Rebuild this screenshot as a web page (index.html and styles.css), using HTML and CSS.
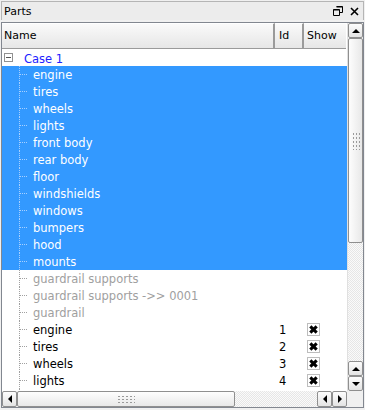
FILE: index.html
```html
<!DOCTYPE html>
<html lang="en">
<head>
    <meta charset="UTF-8">
    <title>Parts</title>
    <link rel="stylesheet" href="styles.css">
</head>
<body>
    <div class="dock">
        <div class="titlebar">
            <span class="title">Parts</span>
            <span class="title-btns">
                <svg width="10" height="10" viewBox="0 0 10 10"><path d="M3.5 0.5h6v6h-3M0.5 3.5h6v6h-6z" fill="none" stroke="#000"/><path d="M3.5 1h6M0.5 4h6" stroke="#000"/></svg>
                <svg width="9" height="9" viewBox="0 0 9 9"><path d="M1 1L8 8M8 1L1 8" stroke="#000" stroke-width="1.6"/></svg>
            </span>
        </div>

        <div class="tree">
            <div class="view">
                <div class="header">
                    <div class="hcell c-name">Name</div>
                    <div class="hcell c-id">Id</div>
                    <div class="hcell c-show">Show</div>
                </div>
                <div class="rows">
                    <div class="row root">
                        <div class="c-name"><span class="expander"></span><span class="label">Case 1</span></div>
                    </div>
                    <div class="row sel"><div class="c-name"><span class="branch"></span>engine</div></div>
                    <div class="row sel"><div class="c-name"><span class="branch"></span>tires</div></div>
                    <div class="row sel"><div class="c-name"><span class="branch"></span>wheels</div></div>
                    <div class="row sel"><div class="c-name"><span class="branch"></span>lights</div></div>
                    <div class="row sel"><div class="c-name"><span class="branch"></span>front body</div></div>
                    <div class="row sel"><div class="c-name"><span class="branch"></span>rear body</div></div>
                    <div class="row sel"><div class="c-name"><span class="branch"></span>floor</div></div>
                    <div class="row sel"><div class="c-name"><span class="branch"></span>windshields</div></div>
                    <div class="row sel"><div class="c-name"><span class="branch"></span>windows</div></div>
                    <div class="row sel"><div class="c-name"><span class="branch"></span>bumpers</div></div>
                    <div class="row sel"><div class="c-name"><span class="branch"></span>hood</div></div>
                    <div class="row sel"><div class="c-name"><span class="branch"></span>mounts</div></div>
                    <div class="row dim"><div class="c-name"><span class="branch"></span>guardrail supports</div></div>
                    <div class="row dim"><div class="c-name"><span class="branch"></span>guardrail supports -&gt;&gt; 0001</div></div>
                    <div class="row dim"><div class="c-name"><span class="branch"></span>guardrail</div></div>
                    <div class="row"><div class="c-name"><span class="branch"></span>engine</div><div class="c-id">1</div><div class="c-show"><span class="check"></span></div></div>
                    <div class="row"><div class="c-name"><span class="branch"></span>tires</div><div class="c-id">2</div><div class="c-show"><span class="check"></span></div></div>
                    <div class="row"><div class="c-name"><span class="branch"></span>wheels</div><div class="c-id">3</div><div class="c-show"><span class="check"></span></div></div>
                    <div class="row"><div class="c-name"><span class="branch"></span>lights</div><div class="c-id">4</div><div class="c-show"><span class="check"></span></div></div>
                    <div class="row"><div class="c-name"><span class="branch"></span></div><div class="c-id"></div><div class="c-show"><span class="check"></span></div></div>
                </div>
            </div>

            <div class="vscroll">
                <div class="sbtn"><span class="arr up"></span></div>
                <div class="vthumb"><span class="grip"></span></div>
                <div class="track"></div>
                <div class="sbtn"><span class="arr up"></span></div>
                <div class="sbtn"><span class="arr down"></span></div>
            </div>

            <div class="hscroll">
                <div class="sbtn"><span class="arr left"></span></div>
                <div class="hthumb"><span class="grip wide"></span></div>
                <div class="track"></div>
                <div class="sbtn"><span class="arr left"></span></div>
                <div class="sbtn"><span class="arr right"></span></div>
            </div>

            <div class="corner"></div>
        </div>
    </div>
</body>
</html>
```

FILE: styles.css
```css
body {
    margin: 0;
    width: 365px;
    height: 410px;
    background: #f0f0f0;
    font-family: Tahoma, "DejaVu Sans", sans-serif;
    font-size: 11px;
    overflow: hidden;
}
.dock {
    display: flex;
    flex-direction: column;
    height: 410px;
    box-sizing: border-box;
    padding: 1px 1px 2px 1px;
}
.titlebar {
    display: flex;
    align-items: center;
    justify-content: space-between;
    height: 18px;
    padding: 0 4px 0 2px;
    background: #ececec;
    border: 1px solid #b5b5b5;
    border-bottom: none;
}
.title-btns {
    display: flex;
    gap: 7px;
    align-items: center;
}
.tree {
    flex: 1;
    display: grid;
    grid-template-columns: 1fr 16px;
    grid-template-rows: 1fr 16px;
    border: 1px solid #828790;
    background: #fff;
    overflow: hidden;
    margin-top: 2px;
}
.view {
    overflow: hidden;
    display: flex;
    flex-direction: column;
}
.header {
    display: flex;
    height: 26px;
    flex: none;
}
.hcell {
    box-sizing: border-box;
    padding: 0 0 1px 2px;
    display: flex;
    align-items: center;
    background: linear-gradient(#fafafa, #e6e6e6);
    border-right: 2px solid #9a9a9a;
    border-bottom: 1px solid #9a9a9a;
    border-top: 1px solid #fff;
    color: #000;
}
.hcell.c-show {
    border-right: none;
    padding-left: 3px;
}
.c-name {
    width: 273px;
    flex: none;
    display: flex;
    align-items: center;
    box-sizing: border-box;
}
.c-id {
    width: 29px;
    flex: none;
    box-sizing: border-box;
    padding-left: 4px;
}
.c-show {
    width: 42px;
    flex: none;
    box-sizing: border-box;
    padding-left: 3px;
    display: flex;
    align-items: center;
}
.rows {
    font-family: "DejaVu Sans", sans-serif;
    font-size: 11.5px;
}
.row {
    display: flex;
    align-items: center;
    height: 17px;
    color: #000;
}
.row .c-name {
    align-self: stretch;
}
.row.sel {
    background: #3399ff;
    color: #fff;
}
.row.dim {
    color: #a0a0a0;
}
.row.root {
    color: #2222ff;
}
.expander {
    position: relative;
    width: 9px;
    height: 9px;
    box-sizing: border-box;
    border: 1px solid #919191;
    margin: 0 11px 0 2px;
}
.expander::after {
    content: "";
    position: absolute;
    left: 1px;
    top: 3px;
    width: 5px;
    height: 1px;
    background: #555;
}
.root .label {
    padding-top: 2px;
}
.branch {
    align-self: stretch;
    width: 7px;
    margin: 0 6px 0 17px;
    border-left: 1px dotted #a0a0a0;
    background: linear-gradient(90deg, #a0a0a0 1px, transparent 1px) 0 8px / 2px 1px repeat-x;
}
.sel .branch {
    border-left-color: #a8d0ff;
    background-image: linear-gradient(90deg, #a8d0ff 1px, transparent 1px);
}
.check {
    position: relative;
    width: 13px;
    height: 13px;
    box-sizing: border-box;
    border: 1px solid #bdbdbd;
    background: #fff;
}
.check::before,
.check::after {
    content: "";
    position: absolute;
    left: 1px;
    top: 4px;
    width: 9px;
    height: 3px;
    background: #000;
    transform: rotate(45deg);
}
.check::after {
    transform: rotate(-45deg);
}
.vscroll,
.hscroll {
    display: flex;
    background: #f4f4f4;
}
.vscroll {
    flex-direction: column;
    border-left: 1px solid #e0e0e0;
}
.sbtn {
    flex: none;
    width: 15px;
    height: 15px;
    display: flex;
    align-items: center;
    justify-content: center;
    box-sizing: border-box;
    border: 1px solid #8f8f8f;
    border-radius: 2px;
    background: linear-gradient(#fdfdfd, #e4e4e4);
}
.hscroll .sbtn {
    height: 16px;
}
.arr {
    width: 0;
    height: 0;
    border: 4px solid transparent;
}
.arr.up { border-bottom-color: #000; margin-top: -4px; }
.arr.down { border-top-color: #000; margin-bottom: -4px; }
.arr.left { border-right-color: #000; margin-left: -4px; }
.arr.right { border-left-color: #000; margin-right: -4px; }
.vthumb {
    flex: none;
    height: 205px;
    border: 1px solid #8f8f8f;
    border-radius: 2px;
    background: linear-gradient(90deg, #fdfdfd, #e8e8e8);
    display: flex;
    align-items: center;
    justify-content: center;
    box-sizing: border-box;
}
.hthumb {
    flex: none;
    width: 218px;
    border: 1px solid #8f8f8f;
    border-radius: 2px;
    background: linear-gradient(#fdfdfd, #e8e8e8);
    display: flex;
    align-items: center;
    justify-content: center;
    box-sizing: border-box;
}
.grip {
    width: 8px;
    height: 18px;
    background: radial-gradient(#9a9a9a 0.6px, transparent 0.8px) 0 0 / 3px 4px;
}
.grip.wide {
    width: 18px;
    height: 8px;
    background-size: 4px 3px;
}
.track {
    flex: 1;
    background: repeating-conic-gradient(#e6e6e6 0% 25%, #fafafa 0% 50%) 0 0 / 2px 2px;
}
.corner {
    background: #f0f0f0;
}
```
